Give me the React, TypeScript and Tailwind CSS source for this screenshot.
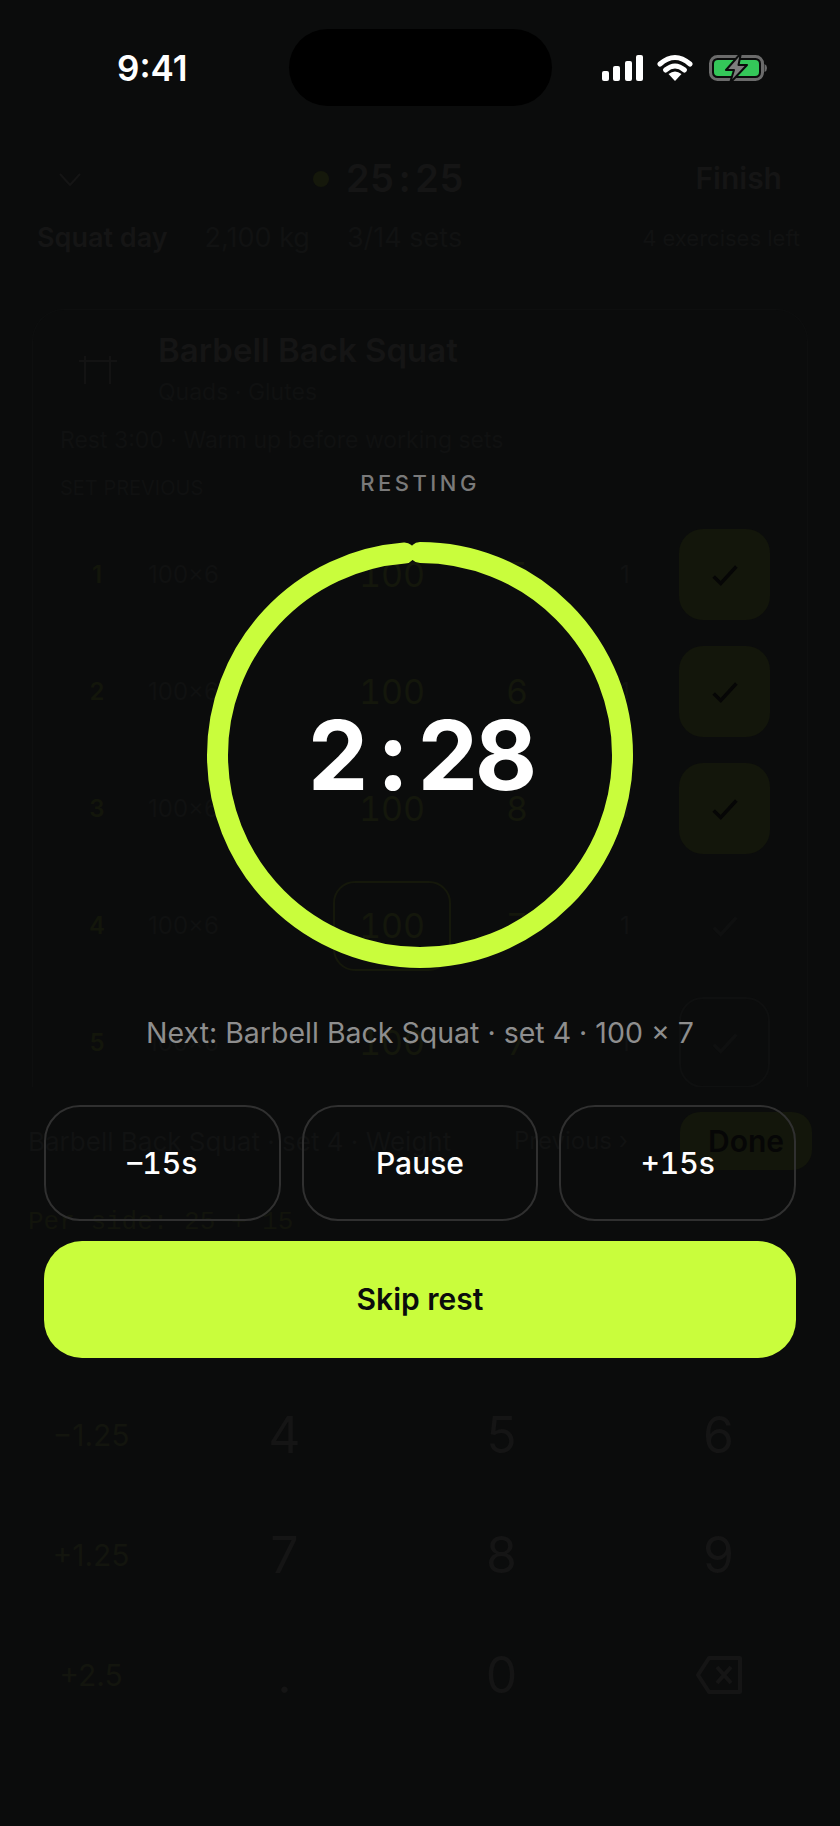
const LIME = "#c9fd3c";

function StatusBar() {
  return (
    <div className="relative h-[120px] w-full shrink-0">
      <span className="absolute left-[117px] top-[46px] text-[35px] leading-[44px] font-semibold text-white">9:41</span>
      <div className="absolute left-[289px] top-[29px] h-[77px] w-[263px] rounded-full bg-black" />
      <svg className="absolute left-[602px] top-[53px]" width="168" height="32" viewBox="0 -2 168 32">
        <rect x="0" y="16" width="7" height="10" rx="2" fill="#fff" />
        <rect x="11" y="11" width="7" height="15" rx="2" fill="#fff" />
        <rect x="23" y="6" width="7" height="20" rx="2" fill="#fff" />
        <rect x="34" y="0" width="7" height="26" rx="2" fill="#fff" />
        <path d="M58 9 Q73 -4 88 9" fill="none" stroke="#fff" strokeWidth="5" strokeLinecap="round" />
        <path d="M63.500 15 Q73 7 82.500 15" fill="none" stroke="#fff" strokeWidth="5" strokeLinecap="round" />
        <path d="M66.500 19 Q73 14 79.500 19 L73 26 Z" fill="#fff" />
        <rect x="108.500" y="1.500" width="52" height="23" rx="7" fill="none" stroke="#6b6b6b" strokeWidth="3" />
        <rect x="112" y="5" width="45" height="16" rx="4" fill="#34c759" />
        <path d="M162.500 9 v8 q2.500 -1 2.500 -4 t-2.500 -4z" fill="#6b6b6b" />
        <path d="M139 -2 L124 15 L132 15 L128 28 L145 10 L136.500 10 Z" fill="#7d7d7d" stroke="#0b0c0c" strokeWidth="2" strokeLinejoin="round" />
      </svg>
    </div>
  );
}

function SetRow({ n, reps, done, active, last }: { n: number; reps: string; done?: boolean; active?: boolean; last?: boolean }) {
  return (
    <div className="flex h-[117px] shrink-0 items-center">
      <span className="w-[82px] text-center text-[24px] font-semibold text-[#13160b]">{n}</span>
      <span className="w-[195px] pl-[10px] text-[24px] text-[#101111]">100×6</span>
      <div
        className={`flex h-[90px] w-[118px] items-center justify-center rounded-[22px] text-[34px] tabular-nums text-[#14170c] ${active ? "border-2 border-[#15180b]" : ""}`}
      >
        100
      </div>
      <span className="w-[132px] text-center text-[34px] tabular-nums text-[#14170c]">{reps}</span>
      <span className="w-[84px] text-center text-[24px] text-[#111212]">1</span>
      <div
        className={`ml-[12px] flex h-[91px] w-[91px] items-center justify-center rounded-[24px] ${done ? "bg-[#13160b]" : ""} ${last ? "border-2 border-[#0f1010]" : ""}`}
      >
        <svg width="34" height="34" viewBox="0 0 24 24" fill="none" stroke={done ? "#060606" : "#0f1010"} strokeWidth="2.500">
          <path d="M4 13l5 5L20 6" />
        </svg>
      </div>
    </div>
  );
}

function Key({ label, side }: { label: string; side?: boolean }) {
  return (
    <div
      className={`flex h-[120px] items-center justify-center ${side ? "text-[30px] text-[#13150e]" : "text-[50px] text-[#151515]"}`}
    >
      {label}
    </div>
  );
}

function WorkoutBehind() {
  return (
    <div className="flex h-full flex-col">
      <div className="h-[120px] shrink-0" />
      <div className="flex h-[90px] shrink-0 items-center justify-between px-[58px] pt-[27px]">
        <svg width="24" height="24" viewBox="0 0 24 24" fill="none" stroke="#151515" strokeWidth="2">
          <path d="M2 7l10 11L22 7" />
        </svg>
        <div className="flex items-center gap-[16px]">
          <span className="h-[16px] w-[16px] rounded-full bg-[#15180b]" />
          <span className="text-[38px] font-semibold tabular-nums text-[#151515]">
            25<span className="mx-[5px]">:</span>25
          </span>
        </div>
        <span className="text-[30px] font-semibold text-[#151515]">Finish</span>
      </div>
      <div className="mt-[10px] flex h-[36px] shrink-0 items-center justify-between pl-[37px] pr-[40px] text-[27px] text-[#111212]">
        <div className="flex gap-[37px]">
          <span className="font-semibold text-[#151515]">Squat day</span>
          <span>2,100 kg</span>
          <span>3/14 sets</span>
        </div>
        <span className="text-[22px]">4 exercises left</span>
      </div>
      <div className="mx-[32px] mt-[53px] h-[778px] shrink-0 overflow-hidden rounded-t-[32px] border border-b-0 border-[#0e0f0f] px-[23px] pt-[18px]">
        <div className="flex gap-[40px] pl-[22px]">
          <svg className="mt-[27px]" width="40" height="30" viewBox="0 0 40 30" fill="none" stroke="#131313" strokeWidth="2">
            <path d="M1 6h38M7 1v28M32 1v28" />
          </svg>
          <div>
            <div className="text-[33px] font-semibold leading-[44px] text-[#151515]">Barbell Back Squat</div>
            <div className="mt-[3px] text-[23px] leading-[34px] text-[#101111]">Quads · Glutes</div>
          </div>
        </div>
        <div className="mt-[16px] pl-[4px] text-[23px] leading-[30px] text-[#101111]">Rest 3:00 · Warm up before working sets</div>
        <div className="mt-[20px] pl-[4px] text-[20px] leading-[26px] text-[#101111]">SET PREVIOUS</div>
        <div className="mt-[15px] flex flex-col">
          <SetRow n={1} reps="5" done />
          <SetRow n={2} reps="6" done />
          <SetRow n={3} reps="8" done />
          <SetRow n={4} reps="7" active />
          <SetRow n={5} reps="7" last />
        </div>
      </div>
      <div className="flex shrink-0 items-center justify-between px-[28px] pt-[25px] pb-[25px] text-[26px] text-[#111212]">
        <span>Barbell Back Squat · set 4 · Weight</span>
        <span className="ml-auto mr-[52px] text-[24px]">Previous ›</span>
        <div className="flex h-[58px] w-[132px] items-center justify-center rounded-[20px] bg-[#13160b] text-[30px] font-semibold text-[#060606]">
          Done
        </div>
      </div>
      <div className="mt-[11px] pl-[28px] font-['Liberation_Mono',monospace] text-[26px] leading-[32px] text-[#12140c]">
        Per side: 25 + 15
      </div>
      <div className="mt-[137px] grid grid-cols-[170px_217px_217px_217px] pl-[6px] text-center">
        <Key label="−1.25" side />
        <Key label="4" />
        <Key label="5" />
        <Key label="6" />
        <Key label="+1.25" side />
        <Key label="7" />
        <Key label="8" />
        <Key label="9" />
        <Key label="+2.5" side />
        <Key label="." />
        <Key label="0" />
        <div className="flex h-[120px] items-center justify-center">
          <svg width="48" height="40" viewBox="0 0 48 40" fill="none" stroke="#151515" strokeWidth="4" strokeLinejoin="round">
            <path d="M14 3h31v34H14L3 20z" />
            <path d="M22 12l14 16M36 12L22 28" />
          </svg>
        </div>
      </div>
    </div>
  );
}

function RestOverlay() {
  return (
    <div className="absolute inset-0 flex flex-col items-center">
      <StatusBar />
      <div className="mt-[349px] text-[22px] font-medium leading-[28px] tracking-[3.5px] text-[#7a7a7a]">RESTING</div>
      <div className="relative mt-[45px] flex h-[426px] w-[426px] items-center justify-center">
        <svg className="absolute inset-0" width="426" height="426" viewBox="0 0 426 426">
          <circle
            cx="213"
            cy="213"
            r="202.500"
            fill="none"
            stroke={LIME}
            strokeWidth="21"
            strokeLinecap="round"
            strokeDasharray="1256.300 1272.300"
            transform="rotate(-90 213 213)"
          />
        </svg>
        <span className="text-[96px] font-bold leading-none tracking-[-4px] tabular-nums text-white">
          2<span className="mx-[15px]">:</span>28
        </span>
      </div>
      <div className="mt-[47px] text-[28.5px] leading-[36px] text-[#8e8e8e]">Next: Barbell Back Squat · set 4 · 100 × 7</div>
      <div className="mt-[54px] grid w-[752px] grid-cols-3 gap-[21px]">
        <button className="h-[116px] rounded-[36px] border-2 border-[#303030] text-[30px] font-medium tabular-nums text-white">–15s</button>
        <button className="h-[116px] rounded-[36px] border-2 border-[#303030] text-[30px] font-medium text-white">Pause</button>
        <button className="h-[116px] rounded-[36px] border-2 border-[#303030] text-[30px] font-medium tabular-nums text-white">+15s</button>
      </div>
      <button className="mt-[20px] h-[117px] w-[752px] rounded-[38px] bg-[#c9fd3c] text-[30px] font-semibold text-[#0b0c0c]">
        Skip rest
      </button>
    </div>
  );
}

export default function App() {
  return (
    <div className="relative h-[1826px] w-[840px] overflow-hidden bg-[#0b0c0c] font-['Inter',sans-serif]">
      <WorkoutBehind />
      <RestOverlay />
    </div>
  );
}
